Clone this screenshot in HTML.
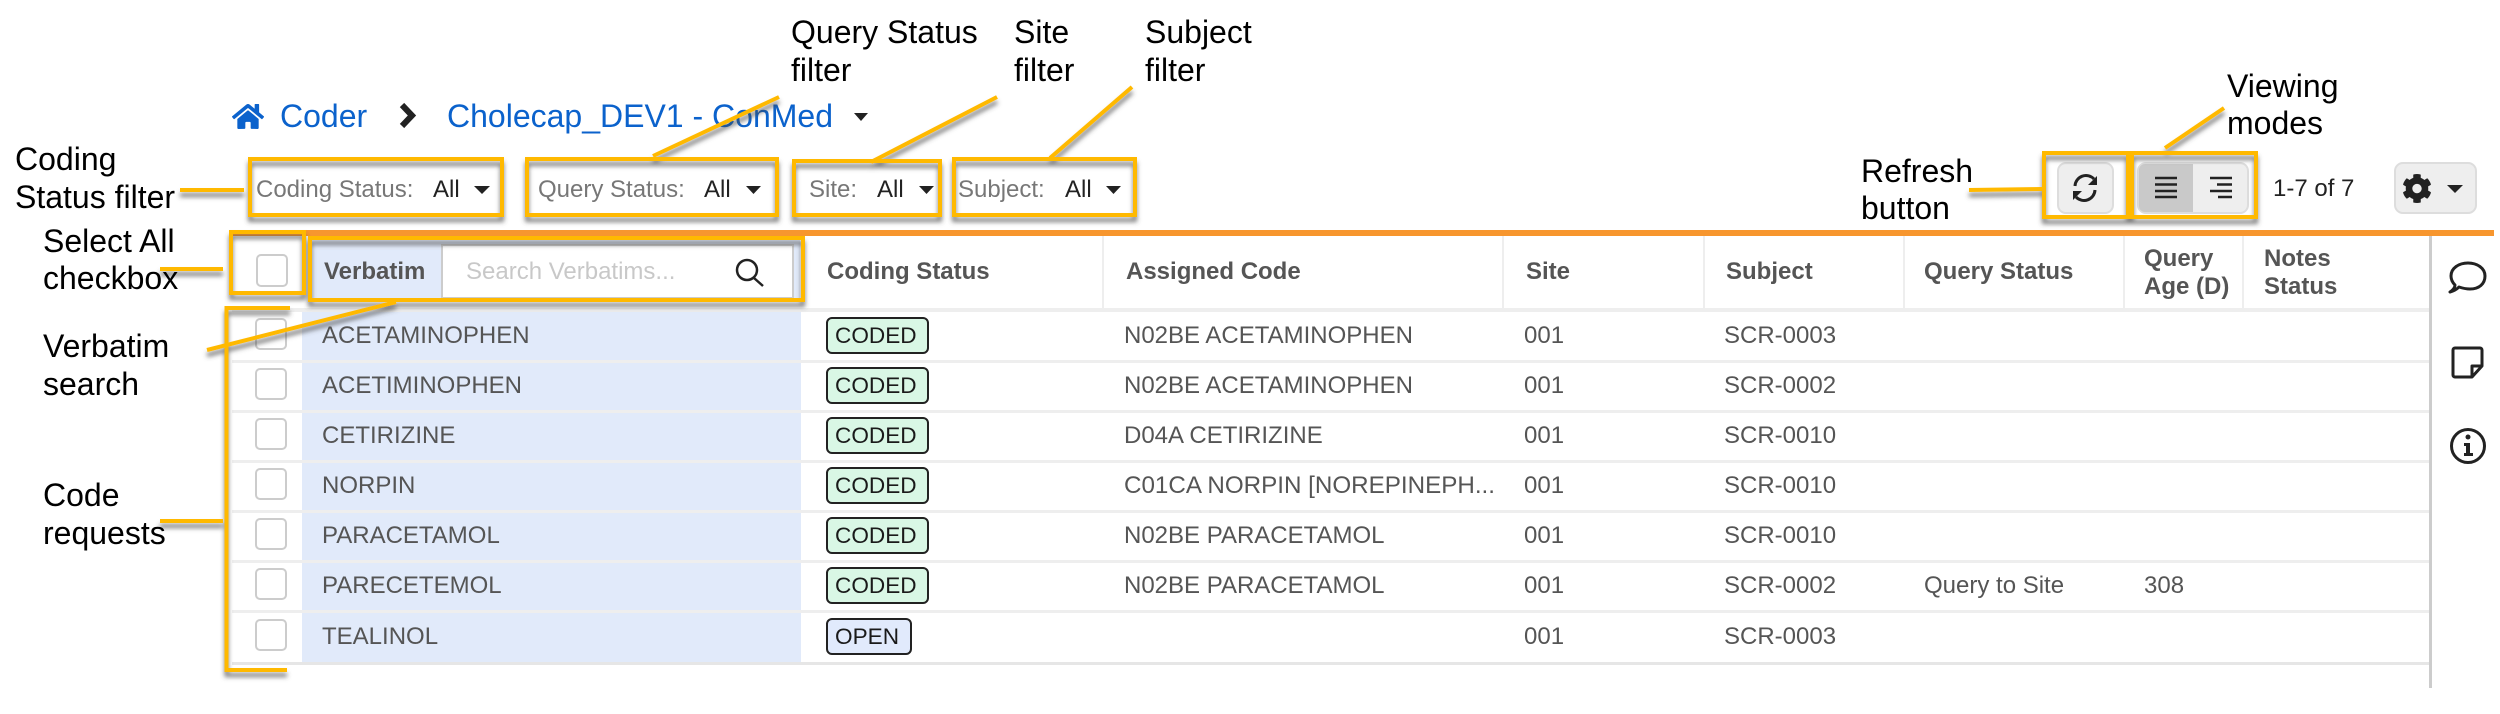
<!DOCTYPE html>
<html><head><meta charset="utf-8">
<style>
html,body{margin:0;padding:0;background:#fff;width:2500px;height:714px;overflow:hidden}
svg{display:block}
text{font-family:"Liberation Sans",Arial,sans-serif;white-space:pre}
.a{font-size:32px;fill:#000}
.f{font-size:24px;fill:#777}
.v{font-size:24px;fill:#222}
.h{font-size:24px;font-weight:700;fill:#555}
.c{font-size:24px;fill:#555}
.b{font-size:22.6px;fill:#1a1a1a}
.l{font-size:32px;fill:#0b62cc}
.y{fill:none;stroke:#ffb900;stroke-width:4}
</style></head><body>
<svg xmlns="http://www.w3.org/2000/svg" width="2500" height="714" viewBox="0 0 2500 714">
<defs>
<filter id="s" filterUnits="userSpaceOnUse" x="0" y="0" width="2500" height="714">
<feDropShadow dx="0" dy="5" stdDeviation="2.5" flood-color="#444" flood-opacity=".7"/>
</filter>
</defs>
<rect width="2500" height="714" fill="#fff"/>

<!-- breadcrumb -->
<svg x="232" y="102" width="32" height="29" viewBox="0 0 576 512"><path fill="#0b62cc" d="M280.37 148.26L96 300.11V464a16 16 0 0 0 16 16l112.06-.29a16 16 0 0 0 15.92-16V368a16 16 0 0 1 16-16h64a16 16 0 0 1 16 16v95.64a16 16 0 0 0 16 16.05L464 480a16 16 0 0 0 16-16V300L295.67 148.26a12.19 12.19 0 0 0-15.3 0zM571.6 251.47L488 182.56V44.05a12 12 0 0 0-12-12h-56a12 12 0 0 0-12 12v72.61L318.47 43a48 48 0 0 0-61 0L4.34 251.47a12 12 0 0 0-1.6 16.9l25.5 31A12 12 0 0 0 45.15 301l235.22-193.74a12.19 12.19 0 0 1 15.3 0L530.9 301a12 12 0 0 0 16.9-1.6l25.5-31a12 12 0 0 0-1.7-16.93z"/></svg>
<text class="l" x="280" y="127">Coder</text>
<path d="M402 105L412 115.5L402 126" fill="none" stroke="#222" stroke-width="6"/>
<text class="l" x="447" y="127">Cholecap_DEV1 - ConMed</text>
<path d="M854 113h14l-7 8z" fill="#222"/>

<!-- filters -->
<text class="f" x="256" y="197">Coding Status:</text><text class="v" x="433" y="197">All</text><path d="M474 186h16l-8 8z" fill="#222"/>
<text class="f" x="538" y="197">Query Status:</text><text class="v" x="704" y="197">All</text><path d="M746 186h15l-7.500 8z" fill="#222"/>
<text class="f" x="809" y="197">Site:</text><text class="v" x="877" y="197">All</text><path d="M919 186h15l-7.500 8z" fill="#222"/>
<text class="f" x="958" y="197">Subject:</text><text class="v" x="1065" y="197">All</text><path d="M1106 186h15l-7.500 8z" fill="#222"/>

<!-- right toolbar -->
<rect x="2058" y="163" width="55" height="50" rx="8" fill="#eee" stroke="#ddd" stroke-width="2"/>
<g fill="none" stroke="#222" stroke-width="3">
<path d="M2075 186a11 11 0 0 1 19-7"/>
<path d="M2095 190a11 11 0 0 1-19 7"/>
</g>
<path d="M2097 176v9h-9zM2073 200v-9h9z" fill="#222"/>
<rect x="2138" y="163" width="110" height="50" rx="8" fill="#eee" stroke="#ddd" stroke-width="2"/>
<path d="M2145 164h48v48h-48a6 6 0 0 1-6-6v-36a6 6 0 0 1 6-6z" fill="#c9c9c9"/>
<g stroke="#222" stroke-width="2.500">
<path d="M2155 178h22M2155 184.500h22M2155 191h22M2155 197h22"/>
<path d="M2210 178h22M2217 184.500h15M2210 191h22M2218 197h14"/>
</g>
<text class="v" x="2273" y="196">1-7 of 7</text>
<rect x="2395" y="163" width="81" height="50" rx="8" fill="#eee" stroke="#ddd" stroke-width="2"/>
<svg x="2402" y="173" width="30" height="31" viewBox="0 0 512 512"><path fill="#222" d="M487.4 315.700l-42.600-24.600c4.300-23.200 4.300-47 0-70.200l42.600-24.600c4.900-2.800 7.100-8.600 5.500-14-11.100-35.600-30-67.800-54.700-94.600-3.800-4.100-10-5.100-14.800-2.300L380.800 110c-17.900-15.400-38.500-27.300-60.800-35.100V25.800c0-5.600-3.900-10.500-9.400-11.700-36.700-8.200-74.300-7.800-109.200 0-5.500 1.200-9.400 6.100-9.400 11.700V75c-22.200 7.900-42.800 19.800-60.800 35.100L88.700 85.500c-4.900-2.800-11-1.900-14.800 2.300-24.700 26.700-43.600 58.900-54.700 94.600-1.700 5.400.6 11.200 5.500 14L67.300 221c-4.300 23.200-4.300 47 0 70.200l-42.600 24.600c-4.900 2.800-7.100 8.600-5.500 14 11.100 35.600 30 67.800 54.700 94.600 3.800 4.100 10 5.100 14.800 2.300l42.600-24.600c17.900 15.400 38.500 27.300 60.800 35.100v49.200c0 5.600 3.900 10.500 9.400 11.700 36.700 8.200 74.300 7.800 109.200 0 5.500-1.200 9.400-6.100 9.400-11.700v-49.200c22.200-7.900 42.800-19.800 60.800-35.100l42.600 24.600c4.900 2.800 11 1.900 14.800-2.300 24.700-26.700 43.600-58.900 54.700-94.600 1.500-5.500-.7-11.300-5.600-14.100zM256 336c-44.100 0-80-35.900-80-80s35.900-80 80-80 80 35.900 80 80-35.900 80-80 80z"/></svg>
<path d="M2447 185h16l-8 8z" fill="#222"/>

<!-- table structure -->
<rect x="232" y="230" width="2262" height="6" fill="#f7962e"/>
<rect x="302" y="236" width="499" height="72" fill="#fff"/>
<rect x="312" y="238" width="488" height="64" fill="#e1eafa"/>
<rect x="442" y="245" width="351" height="53" fill="#fff" stroke="#ccc" stroke-width="2"/>
<rect x="302" y="312" width="499" height="350" fill="#e1eafa"/>
<rect x="232" y="308" width="2197" height="4" fill="#eee"/>
<g fill="#eee">
<rect x="232" y="360" width="2197" height="3"/><rect x="232" y="410" width="2197" height="3"/>
<rect x="232" y="460" width="2197" height="3"/><rect x="232" y="510" width="2197" height="3"/>
<rect x="232" y="560" width="2197" height="3"/><rect x="232" y="610" width="2197" height="3"/>
<rect x="232" y="662" width="2197" height="3" fill="#e6e6e6"/>
</g>
<g fill="#eee">
<rect x="1102" y="236" width="2" height="75"/><rect x="1502" y="236" width="2" height="75"/>
<rect x="1703" y="236" width="2" height="75"/><rect x="1903" y="236" width="2" height="75"/>
<rect x="2123" y="236" width="2" height="75"/><rect x="2242" y="236" width="2" height="75"/>
</g>
<rect x="2429" y="236" width="3" height="452" fill="#ccc"/>

<!-- header -->
<text class="h" x="324" y="279">Verbatim</text>
<text x="466" y="279" style="font-size:24px;fill:#c8c8c8">Search Verbatims...</text>
<g fill="none" stroke="#222" stroke-width="2.500"><circle cx="747" cy="270" r="10"/><path d="M754 278l9 8"/></g>
<text class="h" x="827" y="279">Coding Status</text>
<text class="h" x="1126" y="279">Assigned Code</text>
<text class="h" x="1526" y="279">Site</text>
<text class="h" x="1726" y="279">Subject</text>
<text class="h" x="1924" y="279">Query Status</text>
<text class="h" x="2144" y="266">Query</text><text class="h" x="2144" y="294">Age (D)</text>
<text class="h" x="2264" y="266">Notes</text><text class="h" x="2264" y="294">Status</text>

<!-- checkboxes -->
<g fill="#fff" stroke="#ccc" stroke-width="2">
<rect x="257" y="255" width="30" height="31" rx="4"/>
<rect x="256" y="319" width="30" height="30" rx="4"/><rect x="256" y="369" width="30" height="30" rx="4"/>
<rect x="256" y="419" width="30" height="30" rx="4"/><rect x="256" y="469" width="30" height="30" rx="4"/>
<rect x="256" y="519" width="30" height="30" rx="4"/><rect x="256" y="569" width="30" height="30" rx="4"/>
<rect x="256" y="620" width="30" height="30" rx="4"/>
</g>

<!-- badges -->
<g fill="#d9f7e5" stroke="#222" stroke-width="2">
<rect x="827" y="318" width="101" height="35" rx="5"/><rect x="827" y="368" width="101" height="35" rx="5"/>
<rect x="827" y="418" width="101" height="35" rx="5"/><rect x="827" y="468" width="101" height="35" rx="5"/>
<rect x="827" y="518" width="101" height="35" rx="5"/><rect x="827" y="568" width="101" height="35" rx="5"/>
<rect x="827" y="619" width="84" height="35" rx="5" fill="#e1eafc"/>
</g>
<text class="b" x="835" y="343">CODED</text><text class="b" x="835" y="393">CODED</text>
<text class="b" x="835" y="443">CODED</text><text class="b" x="835" y="493">CODED</text>
<text class="b" x="835" y="543">CODED</text><text class="b" x="835" y="593">CODED</text>
<text class="b" x="835" y="644">OPEN</text>

<!-- rows -->
<text class="c" x="322" y="343">ACETAMINOPHEN</text><text class="c" x="1124" y="343">N02BE ACETAMINOPHEN</text><text class="c" x="1524" y="343">001</text><text class="c" x="1724" y="343">SCR-0003</text>
<text class="c" x="322" y="393">ACETIMINOPHEN</text><text class="c" x="1124" y="393">N02BE ACETAMINOPHEN</text><text class="c" x="1524" y="393">001</text><text class="c" x="1724" y="393">SCR-0002</text>
<text class="c" x="322" y="443">CETIRIZINE</text><text class="c" x="1124" y="443">D04A CETIRIZINE</text><text class="c" x="1524" y="443">001</text><text class="c" x="1724" y="443">SCR-0010</text>
<text class="c" x="322" y="493">NORPIN</text><text class="c" x="1124" y="493" textLength="371" lengthAdjust="spacingAndGlyphs">C01CA NORPIN [NOREPINEPH...</text><text class="c" x="1524" y="493">001</text><text class="c" x="1724" y="493">SCR-0010</text>
<text class="c" x="322" y="543">PARACETAMOL</text><text class="c" x="1124" y="543">N02BE PARACETAMOL</text><text class="c" x="1524" y="543">001</text><text class="c" x="1724" y="543">SCR-0010</text>
<text class="c" x="322" y="593">PARECETEMOL</text><text class="c" x="1124" y="593">N02BE PARACETAMOL</text><text class="c" x="1524" y="593">001</text><text class="c" x="1724" y="593">SCR-0002</text><text class="c" x="1924" y="593">Query to Site</text><text class="c" x="2144" y="593">308</text>
<text class="c" x="322" y="644">TEALINOL</text><text class="c" x="1524" y="644">001</text><text class="c" x="1724" y="644">SCR-0003</text>

<!-- sidebar icons -->
<g fill="none" stroke="#222" stroke-width="3">
<path d="M2450 292c4-1 7-3 9-5 3 1 7 2 11 2 9 0 15-5 15-13s-8-13-17-13-17 5-17 13c0 4 2 7 4 9 0 3-2 5-5 7z" stroke-linejoin="round"/>
<path d="M2482 366v-16a2 2 0 0 0-2-2h-25a2 2 0 0 0-2 2v25a2 2 0 0 0 2 2h17l10-11zM2482 366h-10v11" stroke-linejoin="round"/>
<circle cx="2468" cy="446" r="16.500"/>
</g>
<circle cx="2468" cy="437" r="2.500" fill="#222"/>
<path d="M2464 443h6v10h3v3h-9v-3h2v-7h-2z" fill="#222"/>

<!-- annotation shapes -->
<g filter="url(#s)" class="y">
<rect class="y" x="250" y="159" width="252" height="56"/>
<rect class="y" x="527" y="159" width="250" height="56"/>
<rect class="y" x="794" y="161" width="146" height="54"/>
<rect class="y" x="954" y="159" width="181" height="56"/>
<rect class="y" x="2044" y="153" width="84" height="64"/>
<rect class="y" x="2132" y="153" width="124" height="64"/>
<rect class="y" x="231" y="232" width="73" height="61"/>
<rect class="y" x="310" y="238" width="493" height="62"/>
<path class="y" d="M290 308H226.500V670H287"/>
<path class="y" d="M180 190H244"/>
<path class="y" d="M779 97L653 156"/>
<path class="y" d="M997 97L871 162"/>
<path class="y" d="M1132 87L1050 158"/>
<path class="y" d="M2224 108L2165 148"/>
<path class="y" d="M1969 190L2042 189"/>
<path class="y" d="M160 269H223"/>
<path class="y" d="M396 302L207 350"/>
<path class="y" d="M160 521H223"/>
</g>

<!-- annotation labels -->
<text class="a" x="15" y="170">Coding</text><text class="a" x="15" y="208">Status filter</text>
<text class="a" x="43" y="252">Select All</text><text class="a" x="43" y="289">checkbox</text>
<text class="a" x="43" y="357">Verbatim</text><text class="a" x="43" y="395">search</text>
<text class="a" x="43" y="506">Code</text><text class="a" x="43" y="544">requests</text>
<text class="a" x="791" y="43">Query Status</text><text class="a" x="791" y="81">filter</text>
<text class="a" x="1014" y="43">Site</text><text class="a" x="1014" y="81">filter</text>
<text class="a" x="1145" y="43">Subject</text><text class="a" x="1145" y="81">filter</text>
<text class="a" x="2227" y="97">Viewing</text><text class="a" x="2227" y="134">modes</text>
<text class="a" x="1861" y="182">Refresh</text><text class="a" x="1861" y="219">button</text>
</svg>
</body></html>
